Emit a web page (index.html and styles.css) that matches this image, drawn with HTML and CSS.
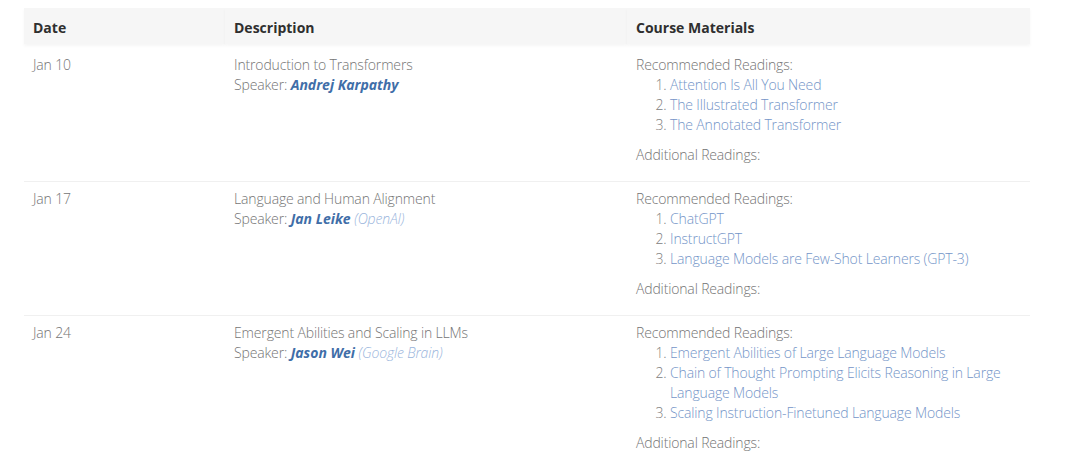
FILE: index.html
```html
<!DOCTYPE html>
<html lang="en">
<head>
<meta charset="utf-8">
<title>Schedule</title>
<link rel="stylesheet" href="styles.css">
</head>
<body>
<div class="wrap">
<table class="schedule">
  <thead>
    <tr>
      <th class="c-date">Date</th>
      <th class="c-desc">Description</th>
      <th class="c-mat">Course Materials</th>
    </tr>
  </thead>
  <tbody>
    <tr>
      <td>Jan 10</td>
      <td>Introduction to Transformers<br>Speaker: <a class="speaker" href="#">Andrej Karpathy</a></td>
      <td>
        <div>Recommended Readings:</div>
        <ol>
          <li><a href="#">Attention Is All You Need</a></li>
          <li><a href="#">The Illustrated Transformer</a></li>
          <li><a href="#">The Annotated Transformer</a></li>
        </ol>
        <div>Additional Readings:</div>
      </td>
    </tr>
    <tr>
      <td>Jan 17</td>
      <td>Language and Human Alignment<br>Speaker: <a class="speaker" href="#">Jan Leike</a> <span class="aff">(OpenAI)</span></td>
      <td>
        <div>Recommended Readings:</div>
        <ol>
          <li><a href="#">ChatGPT</a></li>
          <li><a href="#">InstructGPT</a></li>
          <li><a href="#">Language Models are Few-Shot Learners (GPT-3)</a></li>
        </ol>
        <div>Additional Readings:</div>
      </td>
    </tr>
    <tr>
      <td>Jan 24</td>
      <td>Emergent Abilities and Scaling in LLMs<br>Speaker: <a class="speaker" href="#">Jason Wei</a> <span class="aff">(Google Brain)</span></td>
      <td>
        <div>Recommended Readings:</div>
        <ol>
          <li><a href="#">Emergent Abilities of Large Language Models</a></li>
          <li><a href="#">Chain of Thought Prompting Elicits Reasoning in Large Language Models</a></li>
          <li><a href="#">Scaling Instruction-Finetuned Language Models</a></li>
        </ol>
        <div>Additional Readings:</div>
      </td>
    </tr>
  </tbody>
</table>
</div>
</body>
</html>
```

FILE: styles.css
```css
html, body {
  margin: 0;
  padding: 0;
  background: #ffffff;
}

body {
  font-family: "Open Sans", "Liberation Sans", sans-serif;
  font-size: 14px;
  line-height: 20px;
  color: #747474;
  font-weight: 300;
  letter-spacing: -0.15px;
}

.wrap {
  padding: 8px 0 0 24px;
}

.schedule {
  width: 1006px;
  border-collapse: collapse;
  table-layout: fixed;
}

.schedule th {
  text-align: left;
  font-weight: 700;
  color: #2f2f2f;
  background: #f6f6f6;
  padding: 10px 9px 6px;
  line-height: 20px;
  letter-spacing: 0;
  box-shadow: 0 2px 3px rgba(0, 0, 0, 0.04);
}

.c-date { width: 183px; }
.c-desc { width: 384px; }

.schedule td {
  vertical-align: top;
  padding: 7px 9px 16px;
  border-top: 1px solid #f0f0f0;
}

.schedule tbody tr:first-child td {
  padding-top: 11px;
  border-top: none;
}

.schedule ol {
  margin: 0 0 10px;
  padding-left: 34px;
}

.schedule ol li::marker {
  color: #808080;
}

.schedule a {
  color: #7495c8;
  text-decoration: none;
}

.schedule a.speaker {
  color: #3f6ea8;
  font-weight: 700;
  font-style: italic;
  letter-spacing: 0;
}

.aff {
  color: #9ab5dc;
  font-style: italic;
}
```
